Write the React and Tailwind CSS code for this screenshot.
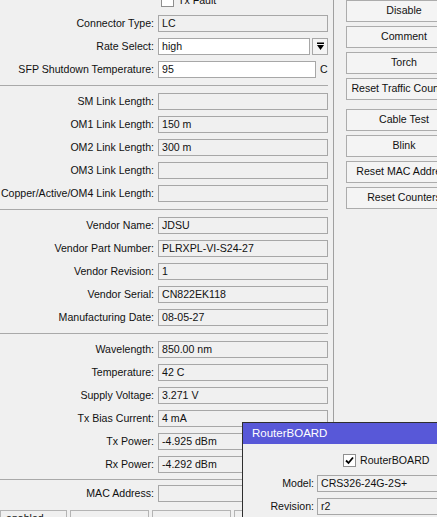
import React from 'react';

const Field = ({ value = '', white = false, className = 'w-[170px]' }) => (
  <div
    className={`h-[17px] border border-[#a7a7a7] pl-[3px] leading-[15px] whitespace-nowrap overflow-hidden ${
      white ? 'bg-white' : 'bg-[#f0f0f0]'
    } ${className}`}
  >
    {value}
  </div>
);

const Row = ({ label, children }) => (
  <div className="flex items-center h-[23px]">
    <div className="w-[154px] shrink-0 text-right whitespace-nowrap">{label}</div>
    <div className="ml-[4px] flex items-center">{children}</div>
  </div>
);

const Sep = ({ h = 'h-[9px]', top = 'pt-[4px]' }) => (
  <div className={`${h} ${top} pr-[5px]`}>
    <div className="h-px bg-[#a9a9a9]" />
  </div>
);

const Button = ({ children }) => (
  <div className="h-[22px] w-[116px] shrink-0 border border-[#acacac] bg-[#f4f4f4] flex items-center justify-center whitespace-nowrap overflow-hidden">
    {children}
  </div>
);

const DropArrow = () => (
  <div className="ml-[2px] w-[16px] h-[17px] border border-[#a7a7a7] bg-[#f4f4f4] flex items-center justify-center">
    <svg width="9" height="9" viewBox="0 0 9 9">
      <rect x="1" y="0.5" width="7" height="1.5" fill="#000" />
      <path d="M1 3 H8 L4.5 8 Z" fill="#000" />
    </svg>
  </div>
);

const sections = [
  [
    ['SM Link Length:', ''],
    ['OM1 Link Length:', '150 m'],
    ['OM2 Link Length:', '300 m'],
    ['OM3 Link Length:', ''],
    ['Copper/Active/OM4 Link Length:', ''],
  ],
  [
    ['Vendor Name:', 'JDSU'],
    ['Vendor Part Number:', 'PLRXPL-VI-S24-27'],
    ['Vendor Revision:', '1'],
    ['Vendor Serial:', 'CN822EK118'],
    ['Manufacturing Date:', '08-05-27'],
  ],
  [
    ['Wavelength:', '850.00 nm'],
    ['Temperature:', '42 C'],
    ['Supply Voltage:', '3.271 V'],
    ['Tx Bias Current:', '4 mA'],
    ['Tx Power:', '-4.925 dBm'],
    ['Rx Power:', '-4.292 dBm'],
  ],
];

export default function App() {
  return (
    <div
      className="relative w-[437px] h-[517px] overflow-hidden bg-[#f0f0f0] text-[10.6px] text-[#111] flex flex-col"
      style={{ fontFamily: '"Liberation Sans", Arial, sans-serif' }}
    >
      <div className="flex h-[510px] shrink-0">
        {/* scrolled form */}
        <div className="w-[334px] shrink-0 border-r border-[#a0a0a0] overflow-hidden">
          <div className="-mt-[11px]">
            <div className="flex items-center h-[23px] pl-[161px]">
              <div className="w-[13px] h-[13px] border border-[#8f8f8f] bg-white" />
              <span className="ml-[4px]">Tx Fault</span>
            </div>
            <Row label="Connector Type:">
              <Field value="LC" />
            </Row>
            <Row label="Rate Select:">
              <Field value="high" white className="w-[152px]" />
              <DropArrow />
            </Row>
            <Row label="SFP Shutdown Temperature:">
              <Field value="95" white className="w-[158px]" />
              <span className="ml-[4px]">C</span>
            </Row>

            {sections.map((rows, i) => (
              <React.Fragment key={i}>
                <Sep />
                {rows.map(([label, value]) => (
                  <Row key={label} label={label}>
                    <Field value={value} />
                  </Row>
                ))}
              </React.Fragment>
            ))}

            <Sep h="h-[6px]" top="pt-[3px]" />
            <Row label="MAC Address:">
              <Field />
            </Row>
          </div>
        </div>

        <div className="ml-[3px] w-px bg-[#a0a0a0]" />

        {/* command buttons */}
        <div className="ml-[9px] flex flex-col gap-[4px]">
          <Button>Disable</Button>
          <Button>Comment</Button>
          <Button>Torch</Button>
          <Button>Reset Traffic Counters</Button>
          <div className="h-[5px] -mt-[4px]" />
          <Button>Cable Test</Button>
          <Button>Blink</Button>
          <Button>Reset MAC Address</Button>
          <Button>Reset Counters</Button>
        </div>
      </div>

      {/* status bar */}
      <div className="flex gap-[3px] h-[20px] shrink-0">
        <div className="w-[67px] border border-[#b4b4b4] pl-[5px] leading-[14px]">enabled</div>
        <div className="w-[79px] border border-[#b4b4b4]" />
        <div className="w-[79px] border border-[#b4b4b4]" />
        <div className="w-[120px] border border-[#b4b4b4]" />
      </div>

      {/* RouterBOARD window */}
      <div className="absolute left-[242px] top-[422px] w-[230px] h-[120px] border border-[#2e2e2e] bg-[#f0f0f0]">
        <div className="h-[21px] bg-[#5858d8] text-white pl-[9px] flex items-center text-[11.5px]">
          RouterBOARD
        </div>
        <div className="pt-[5px]">
          <div className="flex items-center h-[23px] pl-[100px]">
            <div className="w-[13px] h-[13px] border border-[#8f8f8f] bg-white flex items-center justify-center">
              <svg width="9" height="9" viewBox="0 0 9 9">
                <path d="M1 4.5 L3.5 7 L8 1.5" stroke="#000" strokeWidth="1.8" fill="none" />
              </svg>
            </div>
            <span className="ml-[4px]">RouterBOARD</span>
          </div>
          <div className="flex items-center h-[23px]">
            <div className="w-[71px] text-right">Model:</div>
            <Field value="CRS326-24G-2S+" className="ml-[3px] w-[150px]" />
          </div>
          <div className="flex items-center h-[23px]">
            <div className="w-[71px] text-right">Revision:</div>
            <Field value="r2" className="ml-[3px] w-[150px]" />
          </div>
        </div>
      </div>
    </div>
  );
}
